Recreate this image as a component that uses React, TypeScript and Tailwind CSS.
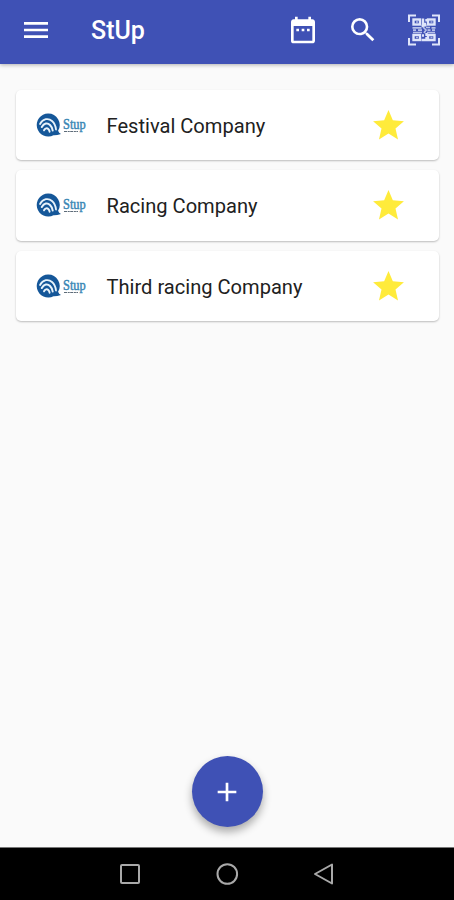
import React from 'react';
import { MdAdd, MdDateRange, MdMenu, MdSearch, MdStar } from 'react-icons/md';

interface Company {
    id: number;
    name: string;
}

const companies: Company[] = [
    { id: 1, name: 'Festival Company' },
    { id: 2, name: 'Racing Company' },
    { id: 3, name: 'Third racing Company' },
];

const QrScanIcon: React.FC = () => (
    <svg width="32" height="32" viewBox="0 0 32 32" fill="none" stroke="#dfe5fa">
        <path d="M1 8V1.500h7M24 1.500h7V8M31 24v6.500h-7M8 30.500H1V24" strokeWidth="2" />
        <g strokeWidth="2.400">
            <rect x="5.500" y="5.500" width="6.500" height="5" />
            <rect x="20" y="5.500" width="6.500" height="5" />
            <rect x="5.500" y="21" width="6.500" height="5" />
            <path d="M15 4.500v5.500h3M18.500 5v2.500M13.500 12l5-1M20 21h6.500v5H20zM13.500 26h5v-3M14 21.500h2M18.500 19v3" />
        </g>
        <path d="M8 8h2M22.500 8h2M8 23.500h2M22.500 23.500h2" strokeWidth="1.300" opacity="0.700" />
        <path d="M4.500 13.800h9M5 16.200h3M10 16.200h4M5 18.500h9M15 13l3 3-2 3M18 13.500h4M19.500 16.200h3M23.500 13.800h4M24 16.200h3M19 18.500h8" strokeWidth="1.700" opacity="0.750" />
    </svg>
);

const StupLogo: React.FC = () => (
    <svg width="50" height="24" viewBox="0 0 50 24" className="block shrink-0 overflow-visible">
        <path d="M12 .5a11.500 11.500 0 1 0 5.500 21.700q3 .2 7.500-1.200-2.200-1-2.900-3.200A11.500 11.500 0 0 0 12 .5z" fill="#155799" />
        <g fill="none" stroke="#e8f3fb" strokeLinecap="round">
            <path d="M4 11C7 5.500 12.500 4.800 16 8c2.500 2.300 3.700 5.200 4 8.500" strokeWidth="1.800" />
            <path d="M5.800 14C8 10 11.500 9.500 14 12c1.700 1.700 2.500 3.500 2.700 5.500" strokeWidth="2" />
            <path d="M8 17.300c1.200-2.300 3-2.600 4.300-1.300.8.8 1.200 1.700 1.300 2.700" strokeWidth="1.900" />
        </g>
        <g transform="translate(27 15.500) scale(0.830 1)">
            <text fill="#3a87b5" stroke="#3a87b5" strokeWidth="0.500" className="font-['Liberation_Serif',serif] text-[15px]">Stup</text>
        </g>
        <path d="M28 18.500h14" stroke="#5d6b78" strokeWidth="1.200" strokeDasharray="3 .7 2 .5" />
    </svg>
);

const AppBar: React.FC = () => (
    <header className="z-10 flex h-16 shrink-0 items-center bg-[#3f51b5] pr-3.5 pb-[5px] pl-5 text-white shadow-[0_1px_4px_rgba(0,0,0,0.3)]">
        <button aria-label="Menu">
            <MdMenu size={32} />
        </button>
        <h1 className="ml-[39px] pt-[3px] text-[25px] leading-8 font-medium">StUp</h1>
        <div className="ml-auto flex items-center">
            <button aria-label="Calendar"><MdDateRange size={32} /></button>
            <button aria-label="Search" className="ml-7"><MdSearch size={32} /></button>
            <button aria-label="Scan" className="ml-[29px]"><QrScanIcon /></button>
        </div>
    </header>
);

const CompanyCard: React.FC<{ company: Company }> = ({ company }) => (
    <li className="flex h-[70.600px] items-center rounded-[5px] bg-white pr-8 pl-5 shadow-[0_1px_2px_rgba(0,0,0,0.25)]">
        <StupLogo />
        <span className="ml-[20.500px] pt-0.5 text-[20.100px] text-[#212121]">{company.name}</span>
        <MdStar size={37} className="mt-px ml-auto text-[#ffeb3b]" />
    </li>
);

const NavigationBar: React.FC = () => (
    <nav className="flex h-[53px] shrink-0 items-center justify-center gap-[73px] border-t border-[#777] bg-black">
        <svg width="24" height="24" viewBox="0 0 24 24" fill="none" stroke="#a9a9a9" strokeWidth="2">
            <rect x="3" y="3" width="18" height="18" rx="1" />
        </svg>
        <svg width="24" height="24" viewBox="0 0 24 24" fill="none" stroke="#a9a9a9" strokeWidth="2">
            <circle cx="12.300" cy="12" r="9.800" />
        </svg>
        <svg width="24" height="24" viewBox="0 0 24 24" fill="none" stroke="#a9a9a9" strokeWidth="2" strokeLinejoin="round">
            <path d="M20 2.500v19L3 12z" />
        </svg>
    </nav>
);

const App: React.FC = () => {
    return (
        <div className="flex h-[900px] w-[454px] flex-col overflow-hidden bg-[#fafafa] font-[Roboto,sans-serif]">
            <AppBar />
            <main className="flex flex-1 flex-col items-center justify-between pt-[25.500px] pr-[15px] pb-5 pl-4">
                <ul className="flex w-full flex-col gap-2.5">
                    {companies.map(company => (
                        <CompanyCard key={company.id} company={company} />
                    ))}
                </ul>
                <button aria-label="Add company" className="mr-px flex size-[71px] items-center justify-center rounded-full bg-[#3f51b5] text-white shadow-[0_5px_9px_rgba(0,0,0,0.32)]">
                    <MdAdd size={32} />
                </button>
            </main>
            <NavigationBar />
        </div>
    );
};

export default App;
